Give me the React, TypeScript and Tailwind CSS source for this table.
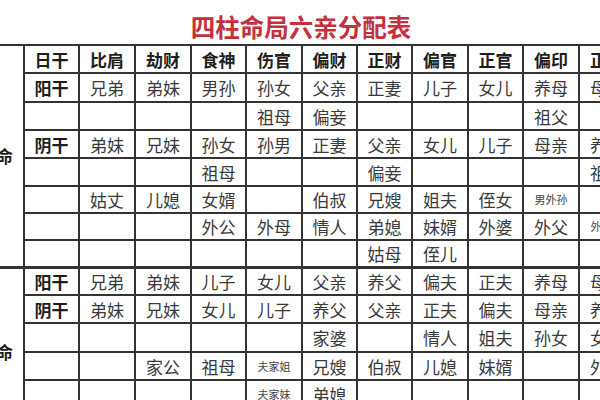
import React from "react";

type Row = { cells: string[]; bold?: boolean; h: string; thick?: boolean };

const colsClass =
  "grid grid-cols-[56px_55px_56px_56px_55px_56px_55px_55px_56px_55px_56px_56px]";

const sec1: Row[] = [
  { cells: ["日干", "比肩", "劫财", "食神", "伤官", "偏财", "正财", "偏官", "正官", "偏印", "正印"], bold: true, h: "h-[28px]" },
  { cells: ["阳干", "兄弟", "弟妹", "男孙", "孙女", "父亲", "正妻", "儿子", "女儿", "养母", "母亲"], h: "h-[29px]" },
  { cells: ["", "", "", "", "祖母", "偏妾", "", "", "", "祖父", ""], h: "h-[28px]" },
  { cells: ["阴干", "弟妹", "兄妹", "孙女", "孙男", "正妻", "父亲", "女儿", "儿子", "母亲", "养母"], h: "h-[28px]" },
  { cells: ["", "", "", "祖母", "", "", "偏妾", "", "", "", "祖父"], h: "h-[28px]" },
  { cells: ["", "姑丈", "儿媳", "女婿", "", "伯叔", "兄嫂", "姐夫", "侄女", "~男外孙", ""], h: "h-[27px]" },
  { cells: ["", "", "", "外公", "外母", "情人", "弟媳", "妹婿", "外婆", "外父", "~外孙女"], h: "h-[27px]" },
  { cells: ["", "", "", "", "", "", "姑母", "侄儿", "", "", ""], h: "h-[28px]", thick: true },
];

const sec2: Row[] = [
  { cells: ["阳干", "兄弟", "弟妹", "儿子", "女儿", "父亲", "养父", "偏夫", "正夫", "养母", "母亲"], h: "h-[27px]" },
  { cells: ["阴干", "弟妹", "兄妹", "女儿", "儿子", "养父", "父亲", "正夫", "偏夫", "母亲", "养母"], h: "h-[28px]" },
  { cells: ["", "", "", "", "", "家婆", "", "情人", "姐夫", "孙女", "女婿"], h: "h-[29px]" },
  { cells: ["", "", "家公", "祖母", "~夫家姐", "兄嫂", "伯叔", "儿媳", "妹婿", "", "外孙"], h: "h-[28px]" },
  { cells: ["", "", "", "", "~夫家妹", "弟媳", "", "", "", "", ""], h: "h-[28px]" },
  { cells: ["", "", "", "", "", "", "", "", "", "", ""], h: "h-[28px]" },
];

function Cell({ text, bold, first, thick }: { text: string; bold?: boolean; first?: boolean; thick?: boolean }) {
  const small = text.startsWith("~");
  const t = small ? text.slice(1) : text;
  return (
    <div
      className={
        "flex items-center justify-center border-r-2 border-[#333333] leading-none " +
        (thick ? "border-b-[3px] " : "border-b-2 ") +
        (small ? "text-[11px] text-[#444444] " : "text-[17px] ") +
        (bold || first ? "font-bold text-[#1e1e1e]" : "text-[#3a3a3a]")
      }
    >
      {t}
    </div>
  );
}

function Section({ rows, label, spanClass }: { rows: Row[]; label: string; spanClass: string }) {
  return (
    <>
      <div
        className={
          spanClass +
          " col-start-1 flex items-center justify-center border-r-2 border-b-[3px] border-[#333333] text-[17px] font-bold text-[#1e1e1e]"
        }
      >
        {label}
      </div>
      {rows.map((r, ri) =>
        r.cells.map((c, ci) => (
          <Cell key={ri + "-" + ci} text={c} bold={r.bold} first={ci === 0} thick={r.thick} />
        ))
      )}
    </>
  );
}

export default function App() {
  return (
    <div className="w-[600px] h-[400px] overflow-hidden bg-white font-['Noto_Sans_CJK_SC',sans-serif]">
      <div className="h-[44px] pt-[11px] pl-[2px] text-center text-[24.5px] leading-[32px] font-bold text-[#c4303c]">
        四柱命局六亲分配表
      </div>
      <div
        className={
          colsClass +
          " ml-[-31px] w-[663px] border-t-2 border-[#333333] grid-rows-[28px_29px_28px_28px_28px_27px_27px_28px_27px_28px_29px_28px_28px_28px]"
        }
      >
        <Section rows={sec1} label="男命" spanClass="row-span-8 row-start-1" />
        <Section rows={sec2} label="女命" spanClass="row-span-6 row-start-9" />
      </div>
    </div>
  );
}
